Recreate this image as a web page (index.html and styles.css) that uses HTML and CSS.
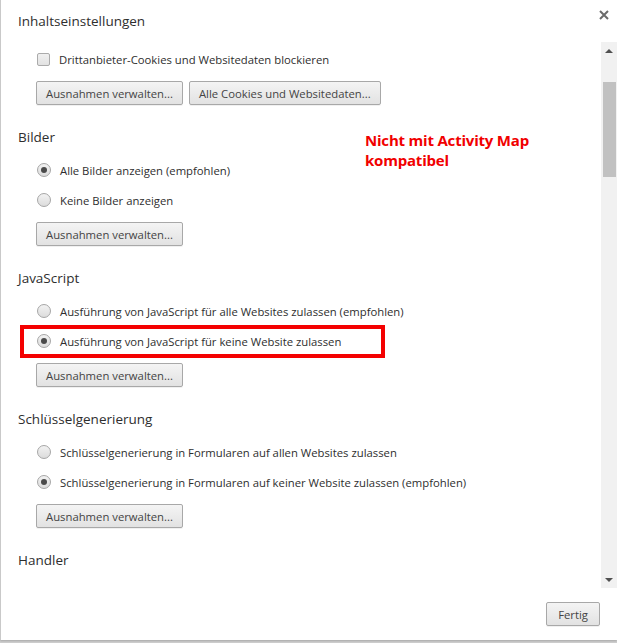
FILE: index.html
```html
<!DOCTYPE html>
<html lang="de">
<head>
<meta charset="utf-8">
<title>Inhaltseinstellungen</title>
<link rel="stylesheet" href="styles.css">
</head>
<body>
<div class="dialog">
  <div class="header">
    <h1 class="title">Inhaltseinstellungen</h1>
    <button class="close" aria-label="Schließen">
      <svg width="10" height="10" viewBox="0 0 10 10"><path d="M1 1 L9 9 M9 1 L1 9" stroke="#6b6b6b" stroke-width="2" fill="none"/></svg>
    </button>
  </div>
  <div class="body">
    <div class="content">
      <div class="row"><span class="checkbox"></span><span class="label">Drittanbieter-Cookies und Websitedaten blockieren</span></div>
      <div class="buttons"><button class="btn">Ausnahmen verwalten...</button><button class="btn">Alle Cookies und Websitedaten...</button></div>

      <h2 class="section">Bilder</h2>
      <div class="row"><span class="radio checked"></span><span class="label">Alle Bilder anzeigen (empfohlen)</span></div>
      <div class="row"><span class="radio"></span><span class="label">Keine Bilder anzeigen</span></div>
      <div class="buttons"><button class="btn">Ausnahmen verwalten...</button></div>

      <h2 class="section">JavaScript</h2>
      <div class="row"><span class="radio"></span><span class="label">Ausführung von JavaScript für alle Websites zulassen (empfohlen)</span></div>
      <div class="row"><span class="radio checked"></span><span class="label">Ausführung von JavaScript für keine Website zulassen</span></div>
      <div class="buttons"><button class="btn">Ausnahmen verwalten...</button></div>

      <h2 class="section">Schlüsselgenerierung</h2>
      <div class="row"><span class="radio"></span><span class="label">Schlüsselgenerierung in Formularen auf allen Websites zulassen</span></div>
      <div class="row"><span class="radio checked"></span><span class="label">Schlüsselgenerierung in Formularen auf keiner Website zulassen (empfohlen)</span></div>
      <div class="buttons"><button class="btn">Ausnahmen verwalten...</button></div>

      <h2 class="section">Handler</h2>

      <div class="highlight"></div>
      <div class="note">Nicht mit Activity Map<br>kompatibel</div>
    </div>
    <div class="scrollbar">
      <div class="arrow up"></div>
      <div class="track"><div class="thumb"></div></div>
      <div class="arrow down"></div>
    </div>
  </div>
  <div class="footer">
    <button class="btn btn-done">Fertig</button>
  </div>
</div>
</body>
</html>
```
FILE: styles.css
```css
* { box-sizing: border-box; }
html, body { margin: 0; padding: 0; }
body {
  background: #cfcfcf;
  font-family: "Open Sans", "Noto Sans", sans-serif;
  color: #2e2e2e;
  width: 617px;
  height: 643px;
  overflow: hidden;
}
.dialog {
  width: 617px;
  height: 640px;
  background: #fff;
  border-left: 1px solid #c9c9c9;
  display: flex;
  flex-direction: column;
  box-shadow: 0 1px 2px rgba(0,0,0,0.2);
}
.header {
  height: 42px;
  display: flex;
  align-items: center;
  justify-content: space-between;
  padding: 0 8px 0 17px;
}
.title {
  margin: 0;
  font-size: 13.5px;
  font-weight: 400;
  color: #2e2e2e;
  line-height: 20px;
  margin-top: -1px;
}
.close {
  border: 0;
  background: none;
  padding: 0;
  width: 10px;
  height: 10px;
  align-self: flex-start;
  margin-top: 10px;
  display: flex;
}
.body {
  height: 546px;
  display: flex;
}
.content {
  flex: 1;
  position: relative;
  padding: 2px 0 0 17px;
  overflow: hidden;
}
.row {
  height: 30px;
  display: flex;
  align-items: center;
  padding-left: 19px;
  font-size: 11.3px;
  color: #2e2e2e;
}
.label { margin-left: 9px; white-space: nowrap; }
.checkbox {
  width: 13px;
  height: 13px;
  border: 1px solid #ababab;
  border-radius: 2px;
  background: linear-gradient(#f0f0f0, #e2e2e2);
}
.radio {
  width: 14px;
  height: 14px;
  border: 1px solid #a6a6a6;
  border-radius: 50%;
  background: linear-gradient(#f2f2f2, #dcdcdc);
  display: flex;
  align-items: center;
  justify-content: center;
}
.radio.checked::after {
  content: "";
  width: 6px;
  height: 6px;
  border-radius: 50%;
  background: #4a4a4a;
}
.buttons {
  display: flex;
  gap: 6px;
  padding-left: 18px;
  margin-top: 7px;
}
.btn {
  height: 24px;
  padding: 0 9px;
  border: 1px solid #a8a8a8;
  border-radius: 2px;
  background: linear-gradient(#f4f4f4, #e2e2e2);
  font-family: "Open Sans", "Noto Sans", sans-serif;
  font-size: 11.3px;
  color: #444;
  box-shadow: 0 1px 0 rgba(0,0,0,0.06);
}
.btn-done {
  padding: 0 11px;
}
.section {
  margin: 20px 0 6px 0;
  height: 24px;
  line-height: 24px;
  font-size: 13.5px;
  font-weight: 400;
  color: #2e2e2e;
}
.highlight {
  position: absolute;
  left: 19px;
  top: 283px;
  width: 365px;
  height: 33px;
  border: 4px solid #f40000;
}
.note {
  position: absolute;
  left: 364px;
  top: 88px;
  font-size: 15px;
  line-height: 20px;
  font-weight: 700;
  color: #f10000;
  letter-spacing: -0.2px;
}
.scrollbar {
  width: 16px;
  background: #f1f1f1;
  display: flex;
  flex-direction: column;
}
.arrow {
  height: 17px;
  display: flex;
  align-items: center;
  justify-content: center;
}
.arrow::after {
  content: "";
  width: 0;
  height: 0;
  border-left: 4px solid transparent;
  border-right: 4px solid transparent;
}
.arrow.up::after { border-bottom: 4px solid #505050; }
.arrow.down::after { border-top: 4px solid #505050; }
.track {
  flex: 1;
  padding: 23px 1px 0 2px;
}
.thumb {
  height: 95px;
  background: #c1c1c1;
}
.footer {
  flex: 1;
  display: flex;
  justify-content: flex-end;
  align-items: flex-start;
  padding: 14px 17px 0 0;
}
```
